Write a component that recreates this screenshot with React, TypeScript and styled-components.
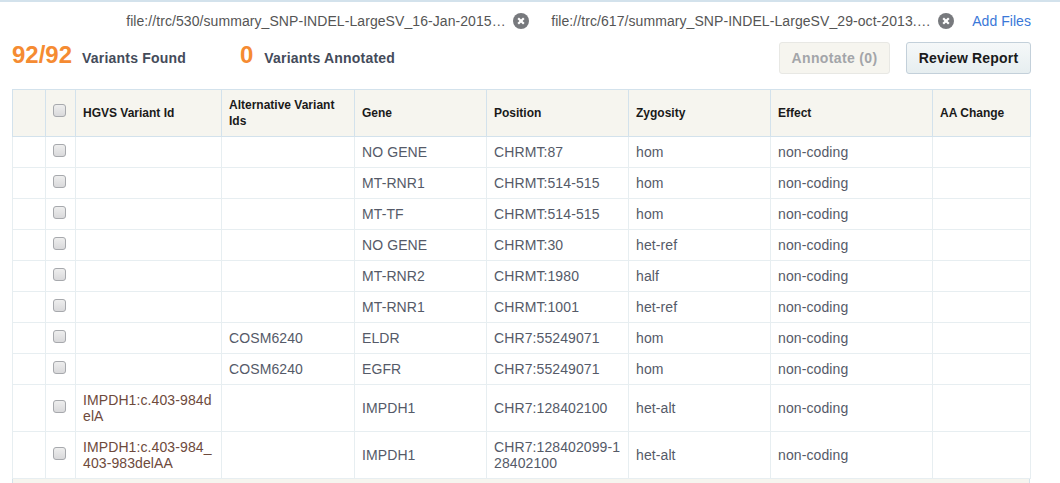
import React from 'react';
import styled, { createGlobalStyle } from 'styled-components';

const GlobalStyle = createGlobalStyle`
  html, body {
    margin: 0;
    padding: 0;
    background: #fff;
    overflow: hidden;
  }
  body {
    font-family: 'Liberation Sans', Arial, sans-serif;
    color: #444b5a;
  }
`;

const Page = styled.div`
  width: 1060px;
  height: 483px;
  overflow: hidden;
  border-top: 2px solid #d3e2ec;
  box-sizing: border-box;
`;

const FileBar = styled.div`
  display: flex;
  justify-content: flex-end;
  align-items: center;
  height: 38px;
  padding-right: 29px;
  font-size: 14px;
`;

const FileItem = styled.div<{ $space: number }>`
  display: flex;
  align-items: center;
  gap: 6px;
  margin-right: ${(p) => p.$space}px;
  color: #555;
`;

const FileName = styled.span`
  display: block;
  width: 381px;
  white-space: nowrap;
  letter-spacing: 0.07px;
`;

const RemoveIcon = styled.svg`
  width: 16px;
  height: 16px;
  flex: none;
`;

const AddFiles = styled.a`
  color: #3a78d8;
  text-decoration: none;
  letter-spacing: 0.05px;
`;

const SummaryBar = styled.div`
  display: flex;
  align-items: center;
  justify-content: space-between;
  height: 32px;
  margin-top: 2px;
  padding: 0 29px 0 12px;
`;

const Stats = styled.div`
  display: flex;
  align-items: baseline;
  padding-bottom: 6px;
`;

const Count = styled.span`
  font-size: 24px;
  font-weight: bold;
  color: #f58b32;
`;

const CountLabel = styled.span<{ $before: number; $after?: number }>`
  margin-left: ${(p) => p.$before}px;
  margin-right: ${(p) => p.$after ?? 0}px;
  font-size: 14px;
  font-weight: bold;
  letter-spacing: 0.2px;
  color: #444b5a;
`;

const Actions = styled.div`
  display: flex;
  gap: 16px;
`;

const Button = styled.button<{ $disabled?: boolean }>`
  height: 32px;
  box-sizing: border-box;
  padding: 0;
  border-radius: 3px;
  font-family: inherit;
  font-size: 14px;
  font-weight: bold;
  width: ${(p) => (p.$disabled ? '111px' : '125px')};
  letter-spacing: ${(p) => (p.$disabled ? '0.35px' : '0.17px')};
  color: ${(p) => (p.$disabled ? '#a3a5a9' : '#1a1a1a')};
  background: ${(p) => (p.$disabled ? '#f6f5ef' : 'linear-gradient(#f5f8f9, #e6eef0)')};
  border: 1px solid ${(p) => (p.$disabled ? '#e8e8e4' : '#c3d0da')};
`;

const TableWrap = styled.div`
  margin: 15px 0 0 12px;
  width: 1018px;
`;

const Table = styled.table`
  width: 1018px;
  table-layout: fixed;
  border-collapse: collapse;
  border-left: 1px solid #d3e2ec;
  border-right: 1px solid #d3e2ec;
`;

const Head = styled.th`
  height: 47px;
  box-sizing: border-box;
  padding: 0 7px;
  background: #f6f5ef;
  border: 1px solid #d3e2ec;
  font-size: 12px;
  line-height: 16px;
  font-weight: bold;
  text-align: left;
  color: #1a1a1a;
`;

const Cell = styled.td<{ $tall?: boolean }>`
  height: ${(p) => (p.$tall ? '47px' : '31px')};
  box-sizing: border-box;
  padding: 0 7px;
  border: 1px solid #e7eef1;
  font-size: 14px;
  line-height: 16px;
  letter-spacing: 0.1px;
  color: #555a68;
  word-break: break-all;
`;

const VariantCell = styled(Cell)`
  color: #6e4a3c;
`;

const CheckCell = styled(Cell)`
  padding: 0;
  text-align: center;
`;

const HeadCheck = styled(Head)`
  padding: 0;
  text-align: center;
`;

const Box = styled.span`
  display: inline-block;
  width: 13px;
  height: 13px;
  box-sizing: border-box;
  vertical-align: middle;
  position: relative;
  top: -3px;
  left: -1px;
  border: 1px solid #a7a9ad;
  border-radius: 3px;
  background: linear-gradient(#eeeeee, #d9d9db);
`;

const Footer = styled.div`
  height: 6px;
  background: #f6f5ef;
  border-left: 1px solid #d3e2ec;
  border-right: 1px solid #d3e2ec;
`;

const columns = [33, 30, 146, 133, 132, 142, 142, 162, 98];

const rows = [
  ['', '', 'NO GENE', 'CHRMT:87', 'hom'],
  ['', '', 'MT-RNR1', 'CHRMT:514-515', 'hom'],
  ['', '', 'MT-TF', 'CHRMT:514-515', 'hom'],
  ['', '', 'NO GENE', 'CHRMT:30', 'het-ref'],
  ['', '', 'MT-RNR2', 'CHRMT:1980', 'half'],
  ['', '', 'MT-RNR1', 'CHRMT:1001', 'het-ref'],
  ['', 'COSM6240', 'ELDR', 'CHR7:55249071', 'hom'],
  ['', 'COSM6240', 'EGFR', 'CHR7:55249071', 'hom'],
  ['IMPDH1:c.403-984delA', '', 'IMPDH1', 'CHR7:128402100', 'het-alt'],
  ['IMPDH1:c.403-984_403-983delAA', '', 'IMPDH1', 'CHR7:128402099-128402100', 'het-alt'],
];

const Remove = () => (
  <RemoveIcon viewBox="0 0 16 16">
    <circle cx="8" cy="8" r="8" fill="#77797d" />
    <path d="M5.2 5.2l5.6 5.6M10.8 5.2l-5.6 5.6" stroke="#fff" strokeWidth="2.2" />
  </RemoveIcon>
);

export default function App() {
  return (
    <Page>
      <GlobalStyle />
      <FileBar>
        <FileItem $space={22}>
          <FileName>file://trc/530/summary_SNP-INDEL-LargeSV_16-Jan-2015…</FileName>
          <Remove />
        </FileItem>
        <FileItem $space={18}>
          <FileName>file://trc/617/summary_SNP-INDEL-LargeSV_29-oct-2013.…</FileName>
          <Remove />
        </FileItem>
        <AddFiles href="#">Add Files</AddFiles>
      </FileBar>
      <SummaryBar>
        <Stats>
          <Count>92/92</Count>
          <CountLabel $before={10} $after={54}>Variants Found</CountLabel>
          <Count>0</Count>
          <CountLabel $before={11}>Variants Annotated</CountLabel>
        </Stats>
        <Actions>
          <Button $disabled>Annotate (0)</Button>
          <Button>Review Report</Button>
        </Actions>
      </SummaryBar>
      <TableWrap>
        <Table>
          <colgroup>
            {columns.map((w, i) => (
              <col key={i} style={{ width: w }} />
            ))}
          </colgroup>
          <thead>
            <tr>
              <Head />
              <HeadCheck>
                <Box />
              </HeadCheck>
              <Head>HGVS Variant Id</Head>
              <Head>Alternative Variant Ids</Head>
              <Head>Gene</Head>
              <Head>Position</Head>
              <Head>Zygosity</Head>
              <Head>Effect</Head>
              <Head>AA Change</Head>
            </tr>
          </thead>
          <tbody>
            {rows.map((r, i) => {
              const tall = r[0] !== '';
              return (
                <tr key={i}>
                  <Cell $tall={tall} />
                  <CheckCell $tall={tall}>
                    <Box />
                  </CheckCell>
                  <VariantCell $tall={tall}>{r[0]}</VariantCell>
                  <Cell $tall={tall}>{r[1]}</Cell>
                  <Cell $tall={tall}>{r[2]}</Cell>
                  <Cell $tall={tall}>{r[3]}</Cell>
                  <Cell $tall={tall}>{r[4]}</Cell>
                  <Cell $tall={tall}>non-coding</Cell>
                  <Cell $tall={tall} />
                </tr>
              );
            })}
          </tbody>
        </Table>
        <Footer />
      </TableWrap>
    </Page>
  );
}
